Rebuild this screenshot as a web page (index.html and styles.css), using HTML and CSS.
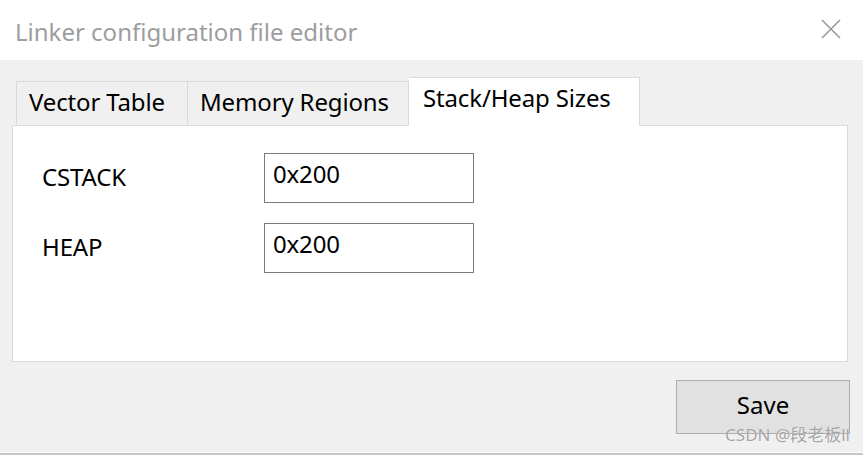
FILE: index.html
```html
<!DOCTYPE html>
<html>
<head>
<meta charset="utf-8">
<link rel="stylesheet" href="styles.css">
</head>
<body>
<div class="window">
  <div class="titlebar">
    <div class="title">Linker configuration file editor</div>
    <svg class="close" width="20" height="20" viewBox="0 0 20 20"><path d="M1 1L19 19M19 1L1 19" stroke="#9a9a9a" stroke-width="1.6" fill="none"/></svg>
  </div>
  <div class="content">
    <div class="tabs">
      <div class="tab tab-vector">Vector Table</div>
      <div class="tab tab-memory">Memory Regions</div>
      <div class="tab tab-stack selected">Stack/Heap Sizes</div>
    </div>
    <div class="panel">
      <div class="row">
        <div class="label">CSTACK</div>
        <input class="field" type="text" value="0x200" readonly>
      </div>
      <div class="row">
        <div class="label">HEAP</div>
        <input class="field" type="text" value="0x200" readonly>
      </div>
    </div>
    <div class="actions">
      <button class="btn">Save</button>
      <div class="watermark">CSDN @段老板ll</div>
    </div>
  </div>
  <div class="bottom-strip"></div>
</div>
</body>
</html>
```
FILE: styles.css
```css
* { box-sizing: border-box; }
html, body { margin: 0; padding: 0; }
body {
  font-family: "Noto Sans", "Open Sans", sans-serif;
  background: #f0f0f0;
  color: #000;
}
.window {
  width: 863px;
  height: 455px;
  background: #f0f0f0;
  display: flex;
  flex-direction: column;
  overflow: hidden;
}
.titlebar {
  height: 60px;
  flex: none;
  background: #fff;
  display: flex;
  align-items: center;
  justify-content: space-between;
  padding: 0 22px 0 15px;
}
.title {
  font-size: 24px;
  color: #9d9d9d;
  padding-top: 2px;
}
.close { display: block; margin-bottom: 3px; }
.content {
  padding: 17px 15px 0 12px;
  display: flex;
  flex-direction: column;
}
.tabs {
  display: flex;
  align-items: flex-end;
  margin-left: 4px;
  margin-bottom: -1px;
  position: relative;
  z-index: 1;
}
.tab {
  height: 44px;
  margin-bottom: 1px;
  border: 1px solid #d9d9d9;
  border-bottom: none;
  background: #f0f0f0;
  font-size: 24px;
  line-height: 40px;
  padding-top: 0;
  white-space: nowrap;
  letter-spacing: -0.15px;
}
.tab-vector { width: 172px; padding-left: 12px; }
.tab-memory { width: 221px; padding-left: 12px; border-left: none; }
.tab-stack { width: 231px; padding-left: 14px; border-left: none; }
.tab.selected {
  height: 49px;
  margin-bottom: 0;
  background: #fff;
  padding-top: 0;
}
.panel {
  height: 237px;
  background: #fff;
  border: 1px solid #d9d9d9;
  padding: 27px 0 0 29px;
  display: flex;
  flex-direction: column;
  gap: 20px;
}
.row {
  display: grid;
  grid-template-columns: 222px 210px;
  align-items: center;
}
.label {
  font-size: 24px;
  letter-spacing: -0.15px;
  padding-bottom: 3px;
}
.field {
  height: 50px;
  width: 210px;
  border: 1px solid #7a7a7a;
  background: #fff;
  font-family: inherit;
  font-size: 24px;
  padding: 0 8px 9px;
  color: #000;
  outline: none;
  margin: 0;
  letter-spacing: -0.15px;
}
.actions {
  display: flex;
  justify-content: flex-end;
  margin-top: 18px;
  margin-right: -2px;
  position: relative;
}
.btn {
  width: 174px;
  height: 54px;
  background: #e1e1e1;
  border: 1px solid #adadad;
  font-family: inherit;
  font-size: 24px;
  color: #000;
  padding: 0 0 5px;
  margin: 0;
}
.watermark {
  position: absolute;
  right: 0;
  top: 45px;
  font-size: 17px;
  line-height: 20px;
  color: rgba(140,140,140,0.8);
  font-family: "Noto Sans", "Noto Sans CJK SC", sans-serif;
  white-space: nowrap;
  text-shadow: 0 0 1px #fff;
}
.bottom-strip {
  margin-top: auto;
  height: 3px;
  background: #c6c6c6;
  border-top: 1px solid #fff;
  flex: none;
}
```
